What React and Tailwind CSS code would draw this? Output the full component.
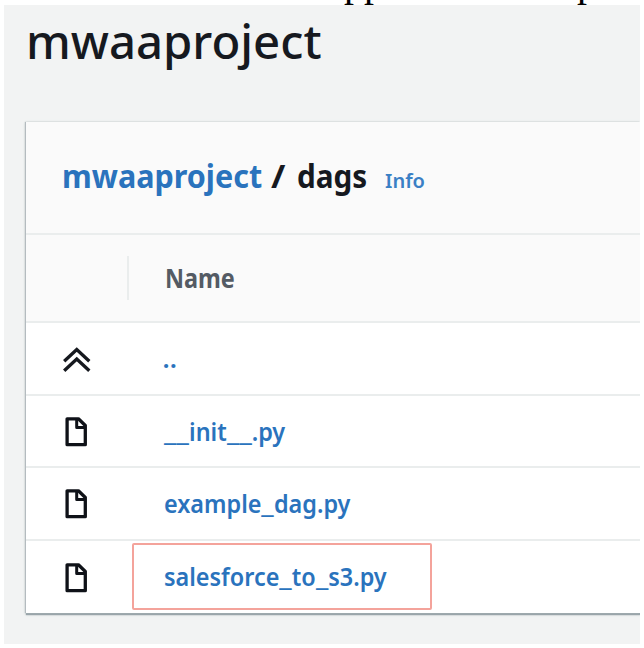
const files = ["__init__.py", "example_dag.py", "salesforce_to_s3.py"];

function FileIcon() {
  return (
    <svg className="mt-[2px] -ml-px" width="24" height="30" viewBox="0 0 24 30" fill="none" stroke="#0f1218" strokeWidth="3.3" strokeLinejoin="round">
      <path d="M3.1 1.8H14.4L21.3 8.5V27.7H3.1Z" />
      <path d="M12.7 2.2V10.6H21" strokeWidth="3" />
    </svg>
  );
}

function UpIcon() {
  return (
    <svg className="mt-[3px]" width="28" height="26" viewBox="0 0 28 26" fill="none" stroke="#16191f" strokeWidth="3.4">
      <path d="M1.2 14.3L14 2.3L26.8 14.3" />
      <path d="M1.2 24L14 12L26.8 24" />
    </svg>
  );
}

function FileLink({ name }) {
  return (
    <a className="mt-[1px] inline-block origin-left scale-x-[0.9] text-[26px] font-semibold whitespace-nowrap text-[#2a73bd]">
      {name.split(/(_)/).map((part, i) =>
        part === "_" ? (
          <span key={i} className="mr-[2.9px] inline-block origin-left scale-x-125">_</span>
        ) : (
          part
        )
      )}
    </a>
  );
}

function Row({ icon, last, children }) {
  return (
    <div className={`flex items-center pl-[37px] ${last ? "h-[72px]" : "h-[72.5px] border-b-2 border-[#eaeded]"}`}>
      <div className="flex w-[100.5px] pr-[73px] justify-center">{icon}</div>
      {children}
    </div>
  );
}

export default function App() {
  return (
    <div className="h-[648px] w-[644px] overflow-hidden bg-white px-1 font-['Noto_Sans',sans-serif] text-[#16191f]">
      <div className="h-[5px] overflow-hidden">
        <div className="-mt-[37px] ml-[340px] flex gap-[193px] font-['Liberation_Serif',serif] text-[40px] leading-[40px] text-black">
          <span>pp</span>
          <span>p</span>
        </div>
      </div>
      <main className="h-[639px] overflow-hidden bg-[#f2f3f3] pl-[22px]">
        <h1 className="h-[117px] pt-[3px]">
          <span className="inline-block origin-left scale-x-[0.985] text-[48px] leading-[66px] font-medium">mwaaproject</span>
        </h1>
        <section className="h-[491px] bg-white shadow-[-1px_0_1px_0_#b4bbbf,0_2px_1px_0_#9aa5aa,0_1px_3px_0_#aab7b8]">
          <header className="flex h-[113px] items-baseline border-b-2 border-[#eaeded] bg-[#fafafa] pt-[31px] pl-[36px] whitespace-nowrap">
            <h2 className="flex w-[323px] text-[33px] leading-[46px] font-bold">
              <a className="w-[209px] origin-left scale-x-[0.925] text-[#2a73bd]"><span>mwaaproject</span></a>
              <span className="w-[25.5px] origin-left scale-x-[1.05]">/</span>
              <span className="origin-left scale-x-[0.9]">dags</span>
            </h2>
            <a className="inline-block text-[20px] font-semibold text-[#3a80c5]">Info</a>
          </header>
          <div className="flex h-[88px] items-center border-b-2 border-[#eaeded] bg-[#fafafa] pl-[101px]">
            <div className="h-11 w-[38px] border-l-2 border-[#eaeded]" />
            <span className="inline-block origin-left scale-x-[0.9] text-[26px] font-bold text-[#545b64]">Name</span>
          </div>
          <Row icon={<UpIcon />}>
            <a className="-ml-px inline-block text-[26px] font-semibold text-[#2a73bd]">..</a>
          </Row>
          {files.map((name, i) => (
            <Row key={name} icon={<FileIcon />} last={i === 2}>
              {i === 2 ? (
                <div className="-ml-[32px] flex h-[67px] w-[300px] items-center rounded-[2px] border-2 border-[#f4a39b] pb-[2px] pl-[30px]">
                  <FileLink name={name} />
                </div>
              ) : (
                <FileLink name={name} />
              )}
            </Row>
          ))}
        </section>
      </main>
    </div>
  );
}
